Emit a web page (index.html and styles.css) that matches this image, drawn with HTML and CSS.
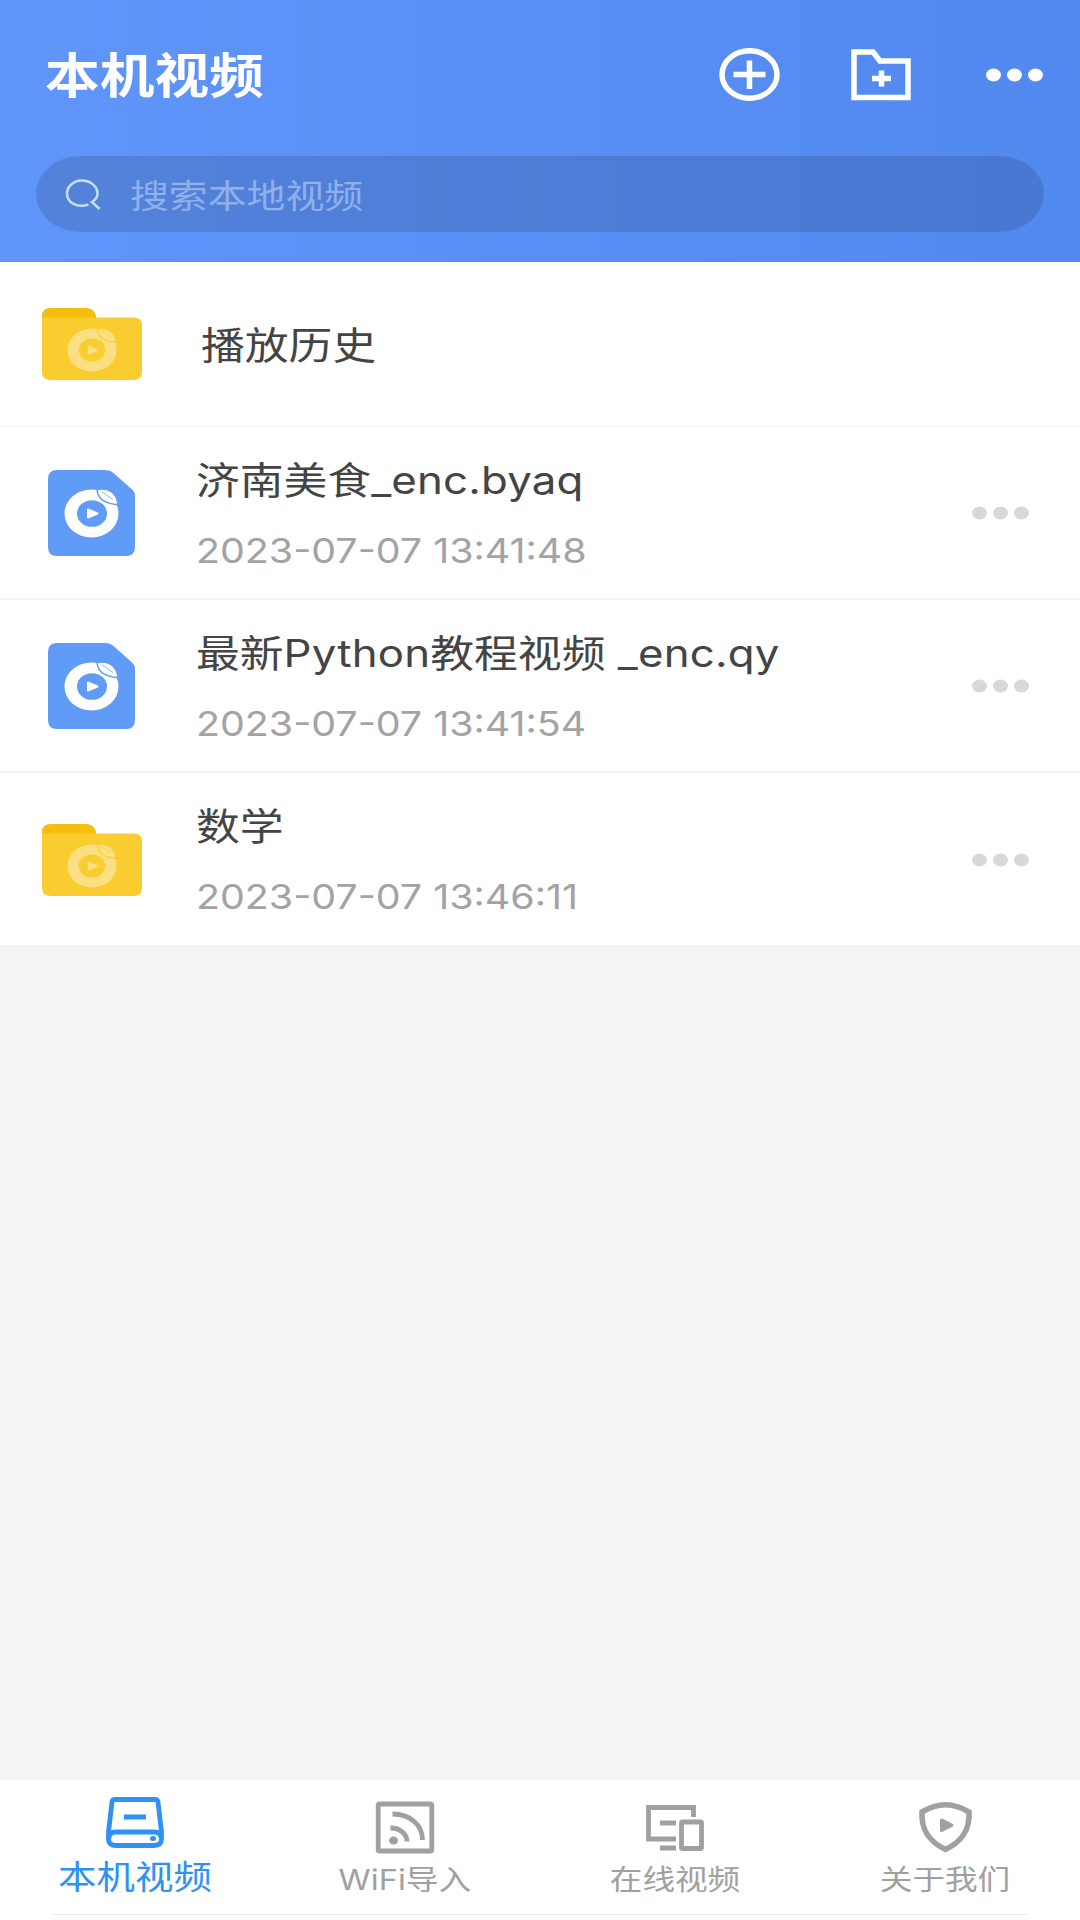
FILE: index.html
```html
<!DOCTYPE html>
<html lang="zh-CN">

<head>
    <meta charset="UTF-8" />
    <meta name="viewport" content="width=device-width, initial-scale=1" />
    <title>本机视频</title>
    <link rel="stylesheet" href="styles.css">
</head>

<body>
    <!-- Símbolos reutilizados na lista -->
    <svg class="symbols">
        <symbol id="folder" viewBox="0 0 100 72">
            <path fill="#f5bd0c" d="M0 14V8Q0 0 9 0H44Q52 0 54 8V14Z" />
            <path fill="#f9cd2f" d="M0 9.500H92Q100 9.500 100 17V64Q100 72 91 72H9Q0 72 0 64Z" />
            <ellipse cx="50" cy="42" rx="24.500" ry="21.500" fill="#fbe083" />
            <ellipse cx="50" cy="42" rx="13.300" ry="11.500" fill="#f9cd2f" />
            <path fill="#fbe083" stroke="#fbe083" stroke-width="1.500" stroke-linejoin="round" d="M46.500 38V46L55 42Z" />
            <path fill="#fbe083" stroke="#f9cd2f" stroke-width="1.300" d="M55.500 20.500C65 19.500 73 23 74 34C64 34 56 30 55.500 20.500Z" />
            <path fill="none" stroke="#f9cd2f" stroke-width="0.600" d="M60 23L69 28.500" />
        </symbol>
        <symbol id="file" viewBox="0 0 87 86">
            <path fill="#5f9bf7" d="M9 0H58Q62 0 65.500 3L84 19.500Q87 22 87 26V77Q87 86 78 86H9Q0 86 0 77V9Q0 0 9 0Z" />
            <ellipse cx="43.500" cy="43.500" rx="27" ry="24" fill="#fff" />
            <ellipse cx="44" cy="43.500" rx="15" ry="13.300" fill="#5f9bf7" />
            <path fill="#fff" stroke="#fff" stroke-width="2" stroke-linejoin="round" d="M40 39.500V47.500L49.500 43.500Z" />
            <path fill="#fff" stroke="#5f9bf7" stroke-width="1.500" d="M49 19.500C60 17.500 69 22 70 34.500C60 34 50 31 49 19.500Z" />
            <path fill="none" stroke="#5f9bf7" stroke-width="0.700" d="M54 22L65 29.500" />
        </symbol>
        <symbol id="dots" viewBox="0 0 58 14">
            <ellipse cx="7.500" cy="7" rx="7.500" ry="6.500" />
            <ellipse cx="28.500" cy="7" rx="7.500" ry="6.500" />
            <ellipse cx="49.500" cy="7" rx="7.500" ry="6.500" />
        </symbol>
    </svg>

    <header class="header">
        <div class="header-top">
            <h1 class="header-title">本机视频</h1>
            <div class="actions">
                <svg class="icon-add" viewBox="0 0 61 53">
                    <ellipse cx="30.500" cy="26.500" rx="27.500" ry="23.700" />
                    <path d="M14.500 26.500H46.500M30.500 12.500V41" />
                </svg>
                <svg class="icon-folder" viewBox="0 0 60 52">
                    <path d="M3 3H22L29 12H57V48.500H3Z" />
                    <path d="M21 29.500H40M30.500 21.500V37.500" />
                </svg>
                <svg class="icon-more"><use href="#dots" /></svg>
            </div>
        </div>
        <div class="search">
            <svg class="icon-search" viewBox="0 0 36 31">
                <path d="M23.500 25.500C11 29.500 2 23 2 14.500C2 7 9 1.500 17 1.500C25.500 1.500 32.500 7.500 32.500 14.500C32.500 18 30 21 27 23L34.500 30" />
            </svg>
            <span class="placeholder">搜索本地视频</span>
        </div>
    </header>

    <main class="list">
        <div class="row row-history">
            <svg class="folder"><use href="#folder" /></svg>
            <div class="name">播放历史</div>
        </div>
        <div class="row">
            <svg class="file"><use href="#file" /></svg>
            <div class="info">
                <div class="name">济南美食<span class="latin">_enc.byaq</span></div>
                <div class="date">2023-07-07 13:41:48</div>
            </div>
            <svg class="more"><use href="#dots" /></svg>
        </div>
        <div class="row">
            <svg class="file"><use href="#file" /></svg>
            <div class="info">
                <div class="name">最新<span class="latin">Python</span>教程视频 <span class="latin">_enc.qy</span></div>
                <div class="date">2023-07-07 13:41:54</div>
            </div>
            <svg class="more"><use href="#dots" /></svg>
        </div>
        <div class="row">
            <svg class="folder"><use href="#folder" /></svg>
            <div class="info">
                <div class="name">数学</div>
                <div class="date">2023-07-07 13:46:11</div>
            </div>
            <svg class="more"><use href="#dots" /></svg>
        </div>
    </main>

    <nav class="tabs">
        <div class="tab active">
            <svg class="icon-disk" viewBox="0 0 58 51">
                <path d="M9 2.500H49Q51.500 2.500 52 5L55.500 35V42Q55.500 48.500 48 48.500H10Q2.500 48.500 2.500 42V35L6 5Q6.500 2.500 9 2.500Z" />
                <path d="M18 20H40M3 41Q3 35 10 35H48Q55 35 55 41" />
                <ellipse class="fill" cx="47" cy="41.500" rx="3" ry="2.500" />
            </svg>
            <span>本机视频</span>
        </div>
        <div class="tab">
            <svg class="icon-wifi" viewBox="0 0 58 51">
                <rect x="2.200" y="2" width="53.600" height="47" rx="1.500" />
                <path d="M16.500 12C33 12 46.500 22 46.500 38M14.500 26C24 26 31 32 31 39.500" />
                <ellipse class="fill" cx="17.500" cy="38.500" rx="4.500" ry="4" />
            </svg>
            <span>WiFi导入</span>
        </div>
        <div class="tab">
            <svg class="icon-screen" viewBox="0 0 58 46">
                <path d="M30 34H2.500V2.500H47.500V12M14 18H30M14 43H30" />
                <rect x="35.500" y="17" width="20" height="26.500" rx="1" />
            </svg>
            <span>在线视频</span>
        </div>
        <div class="tab">
            <svg class="icon-shield" viewBox="0 0 53 51">
                <path d="M3 10Q26.500 -4.500 50 10C51 28 43 39.500 26.500 47.500C10 39.500 2 28 3 10Z" />
                <path class="fill" d="M21 18.500Q21 15.500 24 17L33 21.500Q36 23.200 33 25L24 29.500Q21 31 21 28.500Z" />
            </svg>
            <span>关于我们</span>
        </div>
    </nav>
</body>

</html>
```

FILE: styles.css
```css
* {
    margin: 0;
    padding: 0;
    box-sizing: border-box;
}

body {
    width: 1080px;
    height: 1920px;
    display: flex;
    flex-direction: column;
    font-family: Inter, "Noto Sans CJK SC", sans-serif;
    background-color: #f3f4f6;
    overflow: hidden;
}

svg {
    display: block;
    flex: none;
    overflow: visible;
}

.symbols {
    display: none;
}

/* Cabeçalho */
.header {
    height: 262px;
    flex: none;
    padding: 0 36px;
    background: linear-gradient(to right, #6095fa, #5289ef);
}

.header-top {
    height: 156px;
    display: flex;
    justify-content: space-between;
    padding-left: 9px;
}

.header-title {
    font-size: 48px;
    line-height: 60px;
    padding-top: 46px;
    color: #fff;
    transform: scaleX(1.14);
    transform-origin: left;
}

.actions {
    display: flex;
    height: 53px;
    margin-top: 48px;
    align-items: center;
    fill: none;
    stroke: #fff;
    stroke-width: 5.5;
}

.icon-add {
    width: 61px;
    height: 53px;
    margin-right: 71px;
}

.icon-folder {
    width: 60px;
    height: 52px;
    margin-right: 75px;
}

.icon-more {
    width: 58px;
    height: 14px;
    fill: #fff;
    stroke: none;
}

.search {
    height: 76px;
    display: flex;
    align-items: center;
    padding-left: 29px;
    border-radius: 44px / 38px;
    background-color: rgba(0, 0, 0, 0.12);
}

.icon-search {
    width: 36px;
    height: 31px;
    fill: none;
    stroke: #c5defc;
    stroke-width: 2.6;
}

.placeholder {
    margin-left: 29px;
    padding-bottom: 2px;
    font-size: 33.5px;
    color: #8fb0ea;
    transform: scaleX(1.16);
    transform-origin: left;
}

/* Lista */
.list {
    flex: none;
    background-color: #fff;
}

.row {
    height: 173px;
    display: flex;
    align-items: center;
    padding: 1px 50px 0 42px;
    border-bottom: 2px solid #f5f6f7;
}

.row-history {
    height: 165px;
}

.row:last-child {
    height: 172px;
    border-bottom: none;
}

.folder {
    width: 100px;
    height: 72px;
    margin-right: 54px;
}

.row-history .folder {
    margin-right: 59px;
}

.file {
    width: 87px;
    height: 86px;
    margin: 0 61px 0 6px;
}

.info {
    flex: 1;
    padding-top: 3px;
}

.name {
    font-size: 37.5px;
    line-height: 56px;
    color: #444;
    white-space: nowrap;
    transform: scaleX(1.168);
    transform-origin: left;
}

.row-history .name {
    padding-top: 3px;
}

.latin {
    letter-spacing: 0.15px;
}

.date {
    margin-top: 16px;
    font-size: 34px;
    line-height: 52px;
    color: #a3a3a3;
    white-space: nowrap;
    transform: scaleX(1.158);
    transform-origin: left;
}

.more {
    width: 58px;
    height: 14px;
    fill: #d8d8d8;
}

/* Menu inferior */
.tabs {
    height: 140px;
    margin-top: auto;
    display: flex;
    background: linear-gradient(#e9e9e9, #e9e9e9) 52px 134px / 976px 1px no-repeat #fff;
}

.tab {
    flex: 1;
    height: 118px;
    display: flex;
    flex-direction: column;
    align-items: center;
    justify-content: flex-end;
    font-size: 28px;
    line-height: 36px;
    color: #a0a0a0;
    fill: none;
    stroke: #a0a0a0;
    stroke-width: 4.8;
}

.tab span {
    transform: scaleX(1.165);
}

.tab .fill {
    fill: currentColor;
    stroke: none;
}

.active {
    height: 119px;
    font-size: 33px;
    line-height: 44px;
    color: #2f92f3;
    stroke: #2f92f3;
}

.icon-disk {
    width: 58px;
    height: 51px;
    margin-bottom: 7px;
}

.icon-wifi {
    width: 58px;
    height: 51px;
    margin-bottom: 9px;
}

.icon-screen {
    width: 58px;
    height: 46px;
    margin-bottom: 11px;
}

.icon-shield {
    width: 53px;
    height: 51px;
    margin-bottom: 9px;
}

.icon-shield path:first-child {
    stroke-width: 5.6;
}
```
